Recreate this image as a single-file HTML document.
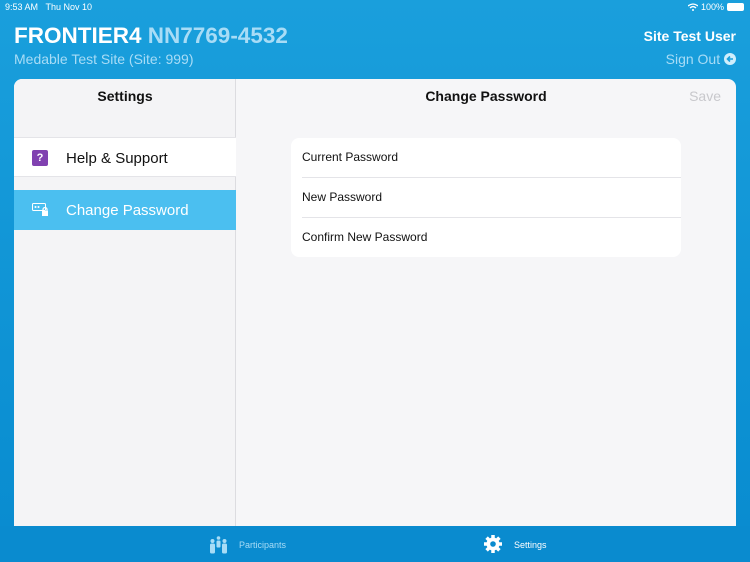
<!DOCTYPE html>
<html><head><style>
*{margin:0;padding:0;box-sizing:border-box}
body{width:750px;height:562px;overflow:hidden;font-family:"Liberation Sans",sans-serif;background:linear-gradient(#1a9fdc,#0b8fd2 80%,#0a8bcf);position:relative}
.abs{position:absolute;white-space:nowrap}
.panel{position:absolute;left:14px;top:79px;width:722px;height:448px;background:#f6f6f8;border-radius:8px 8px 0 0;overflow:hidden}
.left{position:absolute;left:0;top:0;width:222px;height:100%;border-right:1px solid #dcdce0;background:#f4f4f6}
.row{position:absolute;left:0;width:222px;height:40px}
.card{position:absolute;left:277px;top:59px;width:390px;height:119px;background:#fff;border-radius:8px}
.card div{position:absolute;left:11px;font-size:12px;color:#111}
.sep{position:absolute;left:11px;right:0;height:1px;background:#e4e4e8}
.tab{position:absolute;top:526px;left:0;width:750px;height:36px;background:#0a8bcf}
</style></head><body>
<div class="abs" style="left:5px;top:2px;font-size:9px;color:#fff">9:53 AM&nbsp;&nbsp;&nbsp;Thu Nov 10</div>
<div class="abs" style="right:6px;top:2px;font-size:9px;color:#fff;display:flex;align-items:center;gap:3px"><svg width="10" height="8" viewBox="0 0 10 8"><path d="M0 3 Q5 -1 10 3 M2 5 Q5 2 8 5" stroke="#fff" stroke-width="1.3" fill="none"/><circle cx="5" cy="7" r="1" fill="#fff"/></svg>100% <span style="display:inline-block;width:17px;height:8px;background:#fff;border-radius:2px"></span></div>
<div class="abs" style="left:14px;top:23px;font-size:22.5px;font-weight:bold;color:#fff">FRONTIER4 <span style="color:#a8dcf6">NN7769-4532</span></div>
<div class="abs" style="left:14px;top:51px;font-size:14px;color:#a8dcf6">Medable Test Site (Site: 999)</div>
<div class="abs" style="right:14px;top:28px;font-size:14px;color:#fff;font-weight:bold">Site Test User</div>
<div class="abs" style="right:14px;top:51px;font-size:14px;color:#a8dcf6">Sign Out <svg width="12" height="12" viewBox="0 0 12 12" style="vertical-align:-1px"><circle cx="6" cy="6" r="6" fill="#cfeefc"/><path d="M9 6H4M6 3.5 3.5 6 6 8.5" stroke="#1a9fdc" stroke-width="1.6" fill="none"/></svg></div>
<div class="panel">
 <div class="left">
  <div class="abs" style="left:0;width:222px;text-align:center;top:9px;font-size:14px;font-weight:bold;color:#111">Settings</div>
  <div class="row" style="top:58px;background:#fff;border-top:1px solid #e4e4e8;border-bottom:1px solid #e4e4e8">
   <div class="abs" style="left:18px;top:12px;width:16px;height:16px;background:#8041b0;border-radius:2px;color:#fff;font-size:11px;text-align:center;line-height:16px;font-weight:bold">?</div>
   <div class="abs" style="left:52px;top:12px;font-size:15px;color:#111">Help &amp; Support</div>
  </div>
  <div class="row" style="top:111px;background:#4bbff0">
   <svg class="abs" style="left:18px;top:13px" width="18" height="14" viewBox="0 0 18 14"><rect x="0.5" y="0.5" width="13" height="7" rx="1" fill="none" stroke="#fff"/><circle cx="3.5" cy="4" r="1" fill="#fff"/><circle cx="6.5" cy="4" r="1" fill="#fff"/><path d="M11 8V6.5a2 2 0 0 1 4 0V8" stroke="#fff" fill="none" stroke-width="1.3"/><rect x="10" y="8" width="6" height="5" fill="#fff"/></svg>
   <div class="abs" style="left:52px;top:12px;font-size:15px;color:#fff">Change Password</div>
  </div>
 </div>
 <div class="abs" style="left:222px;width:500px;text-align:center;top:9px;font-size:14px;font-weight:bold;color:#111">Change Password</div>
 <div class="abs" style="right:15px;top:9px;font-size:14px;color:#c8c8cc">Save</div>
 <div class="card">
  <div style="top:12px">Current Password</div>
  <div class="sep" style="top:39px"></div>
  <div style="top:52px">New Password</div>
  <div class="sep" style="top:79px"></div>
  <div style="top:92px">Confirm New Password</div>
 </div>
</div>
<div class="tab">
 <svg class="abs" style="left:209px;top:10px" width="19" height="18" viewBox="0 0 19 18"><g fill="#a8dcf6"><circle cx="3.5" cy="5" r="2"/><rect x="1" y="7.5" width="5" height="10" rx="1.5"/><circle cx="9.5" cy="2" r="1.8"/><rect x="7.5" y="4.5" width="4" height="7" rx="1.3"/><circle cx="15.5" cy="5" r="2"/><rect x="13" y="7.5" width="5" height="10" rx="1.5"/></g></svg>
 <div class="abs" style="left:239px;top:14px;font-size:9px;color:#a8dcf6">Participants</div>
 <svg class="abs" style="left:484px;top:9px" width="18" height="18" viewBox="0 0 18 18"><g fill="#fff"><circle cx="9" cy="9" r="6.5"/><g stroke="#fff" stroke-width="3.5"><path d="M9 0v18M0 9h18M2.6 2.6l12.8 12.8M15.4 2.6 2.6 15.4"/></g></g><circle cx="9" cy="9" r="2.8" fill="#0a8bcf"/></svg>
 <div class="abs" style="left:514px;top:14px;font-size:9px;color:#fff">Settings</div>
</div>
</body></html>
